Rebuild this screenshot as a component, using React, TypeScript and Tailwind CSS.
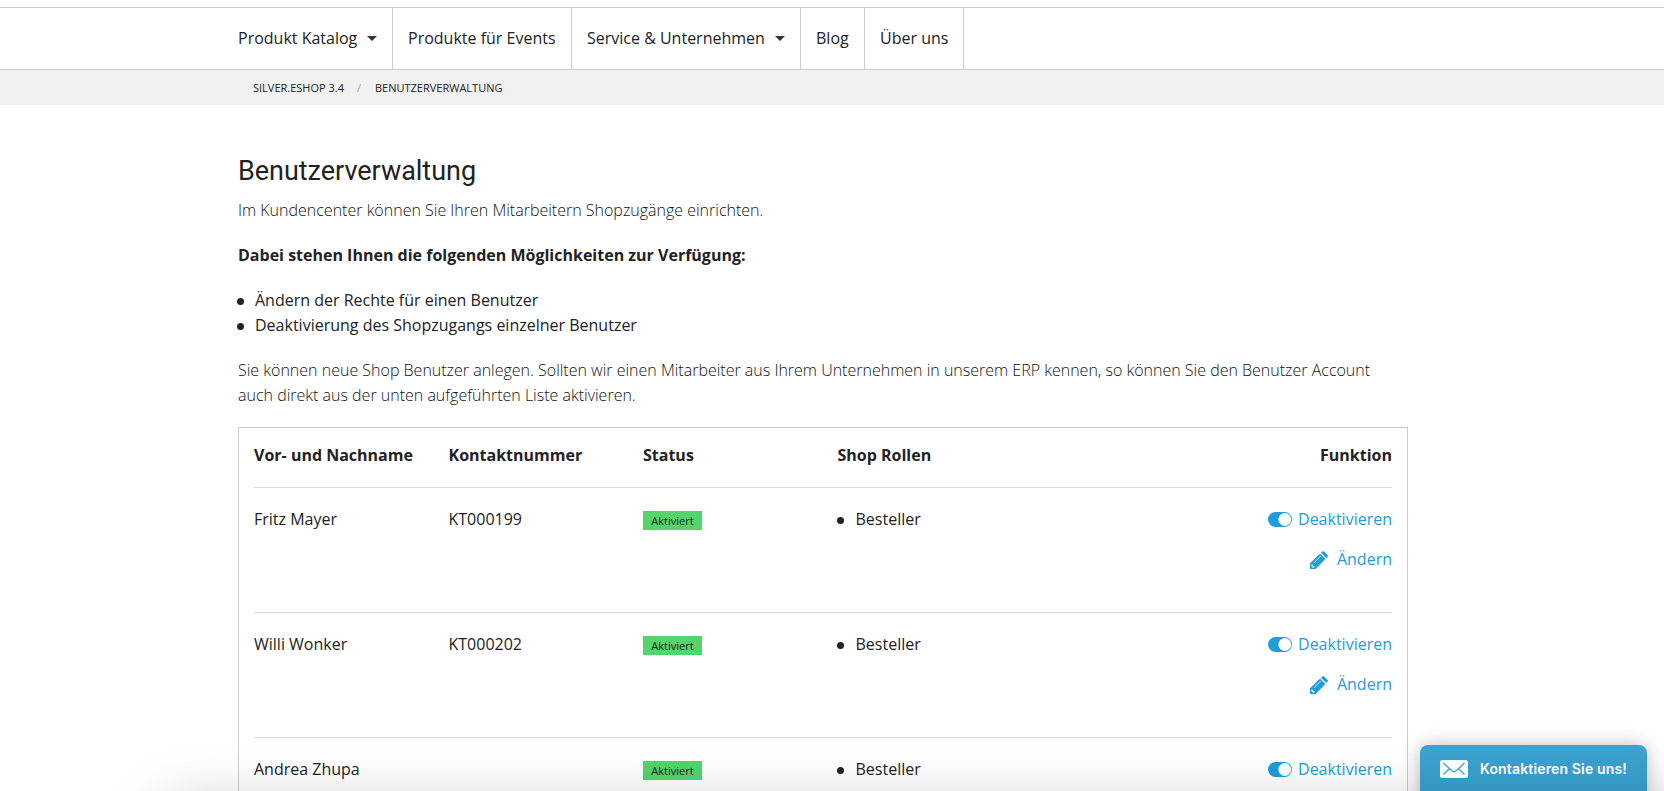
import React from "react";

const navItems = [
  { label: "Produkt Katalog", menu: true, width: "w-[155px]" },
  { label: "Produkte für Events", menu: false, width: "w-[179px] pl-[15px]" },
  { label: "Service & Unternehmen", menu: true, width: "w-[229px] pl-[15px]" },
  { label: "Blog", menu: false, width: "w-[64px] pl-[15px]" },
  { label: "Über uns", menu: false, width: "w-[99px] pl-[15px]" },
];

const users = [
  { name: "Fritz Mayer", contact: "KT000199", editable: true },
  { name: "Willi Wonker", contact: "KT000202", editable: true },
  { name: "Andrea Zhupa", contact: "", editable: false },
];

const columns = "grid grid-cols-[194.5px_194.5px_194.5px_1fr_auto]";

function Bullet() {
  return <span className="mt-px size-[7px] shrink-0 rounded-full bg-[#222]" />;
}

function ToggleIcon() {
  return (
    <svg className="h-[15px] w-6" viewBox="0 0 24 15">
      <rect width="24" height="15" rx="7.5" fill="#1d9ddb" />
      <circle cx="16.8" cy="7.5" r="6.4" fill="#fff" />
    </svg>
  );
}

function PencilIcon() {
  return (
    <svg className="size-[18px]" viewBox="0 0 18 18">
      <path
        fill="#1d9ddb"
        d="M0 18V12.2L10.1 2.6 15.4 7.9 5.6 18ZM11 1.8 12.2.6Q13-.2 14.1.5L17.4 3.7Q18.4 4.7 17.5 5.7L16.2 7Z"
      />
      <path stroke="#fff" strokeWidth="0.8" d="M4 11.8 10.8 5" />
      <path fill="#fff" d="M1.3 13.6 2.6 13.4 2.9 15.1 4.6 15.3 4.4 16.6 3 16.8 1.3 15.1Z" />
    </svg>
  );
}

export default function App() {
  return (
    <div className="relative h-[791px] overflow-hidden bg-white font-['Open_Sans',sans-serif] text-base leading-[25px] text-[#222]">
      <nav className="mt-[7px] flex h-[63px] border-y border-[#ccc] pl-[238px]">
        {navItems.map((item) => (
          <div key={item.label} className={`flex items-center whitespace-nowrap border-r border-[#ccc] pb-px ${item.width}`}>
            {item.label}
            {item.menu && (
              <span className="ml-[10px] border-x-5 border-t-5 border-x-transparent border-t-[#333]" />
            )}
          </div>
        ))}
      </nav>
      <div className="flex h-[35px] items-center bg-[#f1f1f1] pl-[253px] text-[11px] leading-[11px] uppercase">
        <span>silver.eshop 3.4</span>
        <span className="mr-[14px] ml-[13px] text-[#aaa]">/</span>
        <span>Benutzerverwaltung</span>
      </div>

      <main className="ml-[238px] w-[1170px] pt-[47px]">
        <h1 className="mb-2 font-['Roboto',sans-serif] text-[27px] leading-[38px] tracking-[-0.03px]">Benutzerverwaltung</h1>
        <p className="mb-5 font-light text-[#111]">Im Kundencenter können Sie Ihren Mitarbeitern Shopzugänge einrichten.</p>
        <p className="mb-5 font-bold">Dabei stehen Ihnen die folgenden Möglichkeiten zur Verfügung:</p>
        <ul className="mb-5">
          {["Ändern der Rechte für einen Benutzer", "Deaktivierung des Shopzugangs einzelner Benutzer"].map((text) => (
            <li key={text} className="-ml-px flex items-center gap-[11px]">
              <Bullet />
              {text}
            </li>
          ))}
        </ul>
        <p className="w-[1150px] font-light text-[#111]">
          Sie können neue Shop Benutzer anlegen. Sollten wir einen Mitarbeiter aus Ihrem Unternehmen in unserem ERP kennen, so können Sie den Benutzer Account auch direkt aus der unten aufgeführten Liste aktivieren.
        </p>

        <section className="mt-[19px] h-[420px] border border-[#ccc] px-[15px]">
          <div className={`${columns} h-[59px] pt-[15px] font-bold`}>
            <span>Vor- und Nachname</span>
            <span>Kontaktnummer</span>
            <span>Status</span>
            <span>Shop Rollen</span>
            <span>Funktion</span>
          </div>
          {users.map((user) => (
            <div key={user.name} className={`${columns} h-[125px] items-start border-t border-[#ddd] pt-[19px]`}>
              <span>{user.name}</span>
              <span>{user.contact}</span>
              <span className="mt-[4px] h-[19px] w-[59px] bg-[#53d46c] text-center text-[11px] leading-[20px]">Aktiviert</span>
              <span className="-ml-px flex items-center gap-[12px]">
                <Bullet />
                Besteller
              </span>
              <div className="flex flex-col items-end gap-[15px] text-[#1d9ddb]">
                <span className="flex items-center gap-[6px]">
                  <ToggleIcon />
                  Deaktivieren
                </span>
                {user.editable && (
                  <span className="flex items-center gap-[9px]">
                    <PencilIcon />
                    Ändern
                  </span>
                )}
              </div>
            </div>
          ))}
        </section>
      </main>

      <div className="pointer-events-none absolute top-[808px] left-[165px] h-20 w-[1600px] shadow-[0_0_60px_rgba(0,0,0,0.26)]" />

      <div className="absolute top-[745px] left-[1420px] flex h-[60px] w-[227px] items-start rounded-t-lg bg-linear-to-b from-[#3da3d0] to-[#3392bf] pt-[15px] pl-5 shadow-[0_0_18px_rgba(0,0,0,0.25)]">
        <svg className="h-[18px] w-7" viewBox="0 0 28 18">
          <rect width="28" height="18" rx="2.5" fill="#fff" />
          <path d="M3.5 3 11.5 10.5Q14 12.7 16.5 10.5L24.5 3M3.5 14.5 9.3 8.8M24.5 14.5 18.7 8.8" fill="none" stroke="#3da3d0" strokeWidth="1.4" />
        </svg>
        <span className="ml-[12px] font-['Inter',sans-serif] text-sm leading-[18px] font-semibold tracking-[0.15px] whitespace-nowrap text-white">Kontaktieren Sie uns!</span>
      </div>
    </div>
  );
}
